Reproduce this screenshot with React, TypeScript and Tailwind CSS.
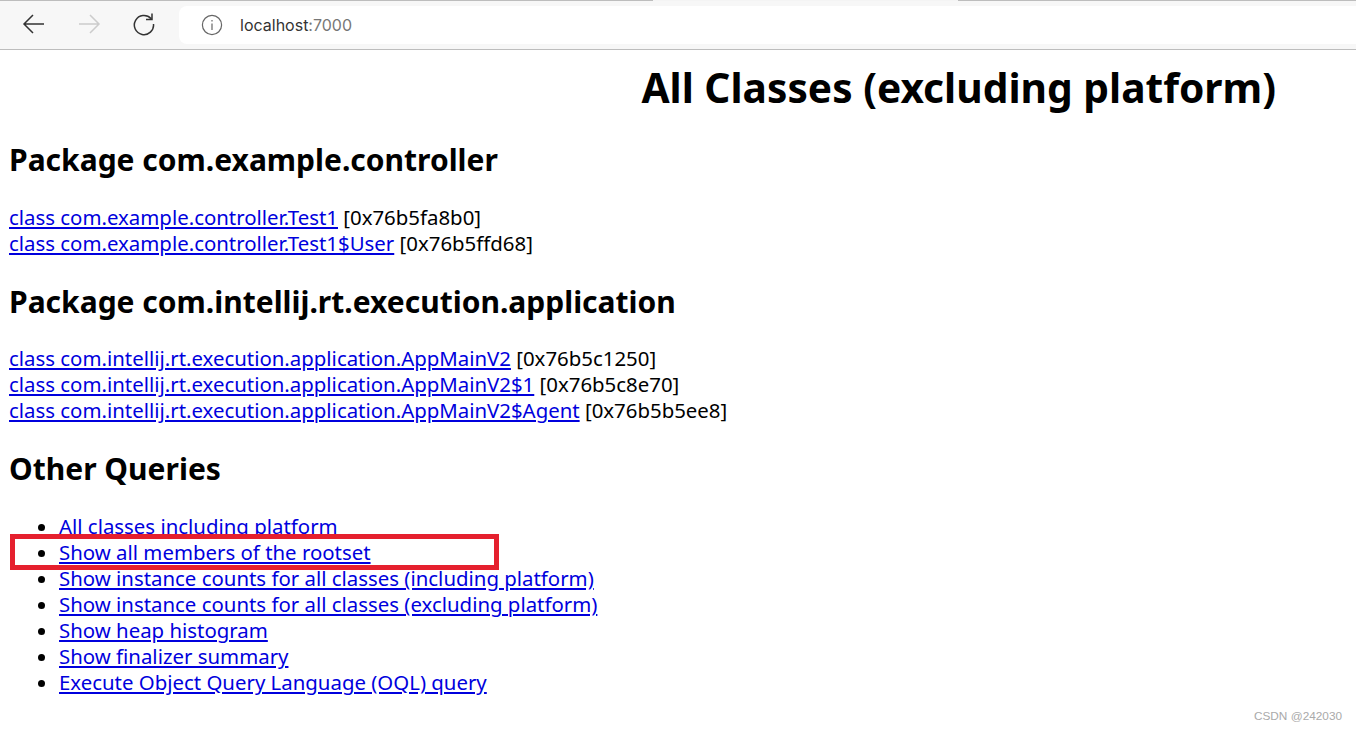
import React from 'react';

const Row: React.FC<{ name: string; addr: string }> = ({ name, addr }) => (
  <div className="h-[26px]">
    <a className="underline text-[#0000dd]">{name}</a> <span>{addr}</span>
  </div>
);

const queries = [
  'All classes including platform',
  'Show all members of the rootset',
  'Show instance counts for all classes (including platform)',
  'Show instance counts for all classes (excluding platform)',
  'Show heap histogram',
  'Show finalizer summary',
  'Execute Object Query Language (OQL) query',
];

const App: React.FC = () => (
  <div className="relative h-[730px] w-[1356px] overflow-hidden bg-white text-black font-['Noto_Sans',sans-serif] text-[20.4px] leading-[26px]">
    <div className="flex h-px">
      <div className="w-[653px] bg-[#bdbdbd]" />
      <div className="w-[305px] bg-[#f4f4f4]" />
      <div className="flex-1 bg-[#bdbdbd]" />
    </div>
    <div className="h-[49px] bg-[#f7f7f7] border-b border-[#bdbdbd] flex items-center">
      <svg className="ml-[22px] mt-[-3px]" width="24" height="24" viewBox="0 0 24 24" fill="none" stroke="#333" strokeWidth="1.5">
        <path d="M22 12H2M11 3l-9 9 9 9" />
      </svg>
      <svg className="ml-[32px] mt-[-3px]" width="24" height="24" viewBox="0 0 24 24" fill="none" stroke="#ccc" strokeWidth="1.5">
        <path d="M1 12h20M12 3l9 9-9 9" />
      </svg>
      <svg className="ml-[30px] mt-[-3px]" width="24" height="24" viewBox="0 0 24 24" fill="none" stroke="#333" strokeWidth="1.5">
        <path d="M19 6.5A9.6 9.6 0 1 0 21.5 12M20 1.5v6h-6" />
      </svg>
      <div className="ml-[23px] mt-[-1px] flex h-[38px] flex-1 items-center rounded-l-lg bg-white pl-[22px]">
        <svg width="22" height="22" viewBox="0 0 22 22" fill="none" stroke="#666" strokeWidth="1.2">
          <circle cx="11" cy="11" r="9.6" />
          <path d="M11 9.5v6.5M11 6v1.6" />
        </svg>
        <span className="ml-[17px] text-[16px] text-[#333] font-['Inter',sans-serif]">
          localhost<span className="text-[#777]">:7000</span>
        </span>
      </div>
    </div>
    <div className="flex justify-end pr-[80px] pt-[10px]">
      <h1 className="text-[40.7px] leading-[54px] font-bold">All Classes (excluding platform)</h1>
    </div>
    <div className="px-[9px]">
      <h2 className="mt-[26px] text-[30px] leading-[40px] font-bold">Package com.example.controller</h2>
      <div className="mt-[24px]">
        <Row name="class com.example.controller.Test1" addr="[0x76b5fa8b0]" />
        <Row name="class com.example.controller.Test1$User" addr="[0x76b5ffd68]" />
      </div>
      <h2 className="mt-[26px] text-[30px] leading-[40px] font-bold">Package com.intellij.rt.execution.application</h2>
      <div className="mt-[23px]">
        <Row name="class com.intellij.rt.execution.application.AppMainV2" addr="[0x76b5c1250]" />
        <Row name="class com.intellij.rt.execution.application.AppMainV2$1" addr="[0x76b5c8e70]" />
        <Row name="class com.intellij.rt.execution.application.AppMainV2$Agent" addr="[0x76b5b5ee8]" />
      </div>
      <h2 className="mt-[26px] text-[30px] leading-[40px] font-bold">Other Queries</h2>
      <ul className="mt-[24px] list-disc pl-[50px]">
        {queries.map((q) => (
          <li key={q} className="h-[26px]">
            <a className="underline text-[#0000dd]">{q}</a>
          </li>
        ))}
      </ul>
    </div>
    <div className="absolute left-[10px] top-[534px] h-[36px] w-[489px] border-[5px] border-[#e5202e]" />
    <div className="absolute right-[14px] top-[709px] text-[11.8px] leading-[14px] text-[#aaa] font-['Liberation_Sans',sans-serif]">CSDN @242030</div>
  </div>
);

export default App;
